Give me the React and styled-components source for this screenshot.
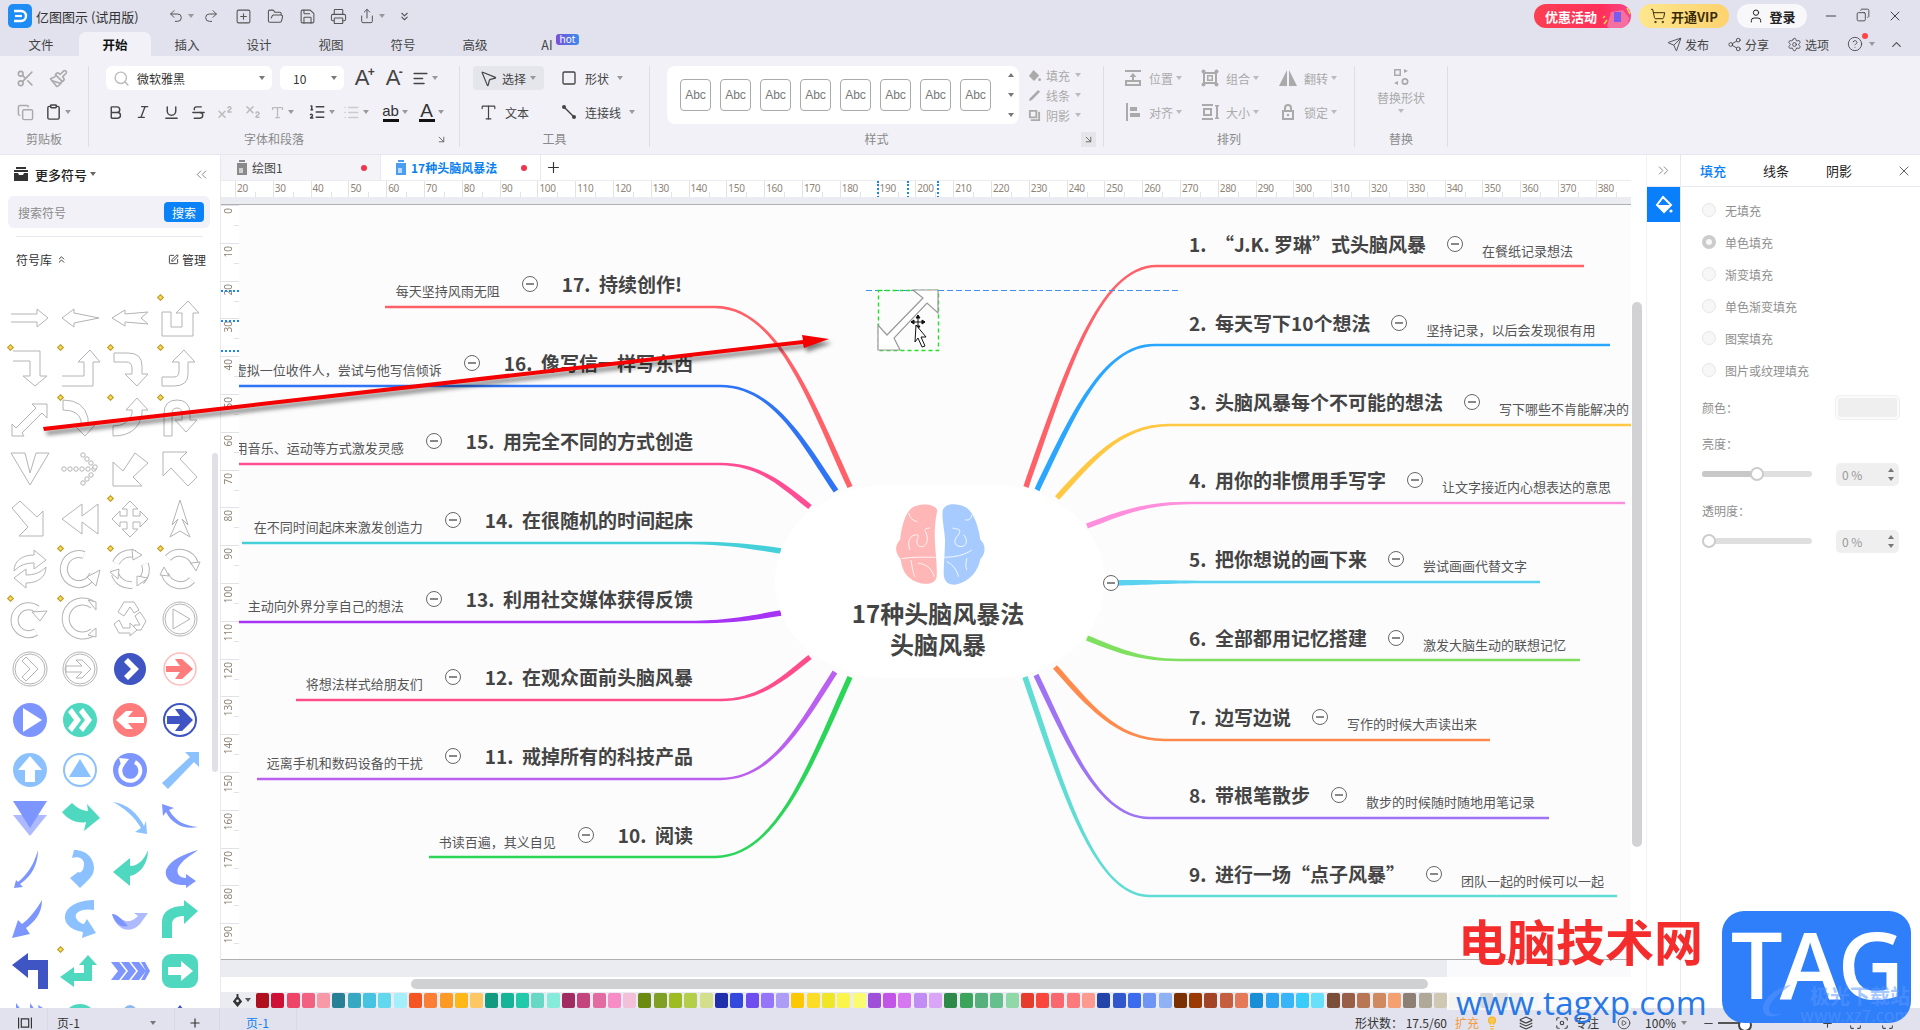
import React from "react";
import styled, { createGlobalStyle } from "styled-components";
import {
  Undo2, Redo2, SquarePlus, FolderOpen, Save, Printer, Share, ChevronsDown, Scissors, Paintbrush, Copy, Clipboard,
  Bold, Italic, Underline, Strikethrough, Superscript, Subscript, Type, AlignLeft, List, MousePointer2, Square,
  Search, Send, Share2, Settings, CircleHelp, ChevronUp, Minus, X, ShoppingCart, User, ChevronsLeft, ChevronsRight,
  Plus, ChevronsUp, SquarePen, CirclePlay, Layers, Lightbulb, Focus, Maximize, ArrowDownRight, ListOrdered,
} from "lucide-react";

const GlobalStyle = createGlobalStyle`
  html, body { margin: 0; padding: 0; background: #fff; }
  * { box-sizing: border-box; }
  body { font-family: "Noto Sans CJK SC", "Noto Sans", sans-serif; color: #333; }
`;

const Page = styled.div`
  position: relative; width: 1920px; height: 1030px; overflow: hidden;
  display: flex; flex-direction: column; font-size: 12px;
`;

/* ---------- title bar ---------- */
const TitleBar = styled.div`
  height: 32px; background: #e1e2ed; display: flex; align-items: center; padding-left: 8px; flex: none;
`;
const AppLogo = styled.svg`width: 24px; height: 24px; flex: none;`;
const AppName = styled.div`margin-left: 4px; width: 132px; font-size: 13px; color: #333; white-space: nowrap;`;
const QuickBtn = styled.div`
  width: ${p => p.$w || 31}px; flex: none; display: flex; align-items: center; justify-content: center; color: #555; gap: 1px;
`;
const Caret = styled.span`
  display: inline-block; width: 0; height: 0; flex: none; margin-left: ${p => p.$ml ?? 3}px;
  border-left: 3px solid transparent; border-right: 3px solid transparent; border-top: 4px solid ${p => p.$c || "#999"};
`;
const Spacer = styled.div`flex: 1;`;
const Pill = styled.div`
  height: 24px; border-radius: 12px; display: flex; align-items: center; justify-content: center; gap: 5px;
  width: ${p => p.$w}px; margin-right: 8px; font-size: 13px; font-weight: 700; flex: none;
`;
const PromoPill = styled(Pill)`
  background: linear-gradient(90deg, #fb3f52, #ff2f5a 70%, #f5468a); color: #fff; justify-content: flex-start;
  padding-left: 11px; position: relative; overflow: hidden;
`;
const PromoArt = styled.svg`position: absolute; right: 0; top: 0; width: 30px; height: 24px;`;
const VipPill = styled(Pill)`background: linear-gradient(90deg, #fde68d, #fed26e); color: #3a2c08;`;
const LoginPill = styled(Pill)`background: #f8f8fb; color: #222;`;
const WinBtn = styled.div`width: 32px; display: flex; justify-content: center; color: #444;`;
const WinButtons = styled.div`display: flex; margin: 0 9px 0 0; flex: none;`;

/* ---------- menu tabs ---------- */
const MenuBar = styled.div`
  height: 24px; background: #e1e2ed; display: flex; align-items: flex-end; flex: none; padding-left: 3px; position: relative;
`;
const MenuTab = styled.div`
  width: ${p => p.$w || 72}px; height: 24px; display: flex; align-items: center; justify-content: center; font-size: 12.5px; flex: none;
  border-radius: 7px 7px 0 0; background: ${p => p.$active ? "#f1f1f7" : "transparent"};
  font-weight: ${p => p.$active ? 700 : 400}; color: ${p => p.$active ? "#111" : "#444"}; position: relative;
`;
const HotBadge = styled.span`
  position: absolute; right: 4px; top: 2px; width: 23px; height: 11px; border-radius: 3px; color: #fff; font-size: 10px;
  line-height: 10px; text-align: center; background: linear-gradient(90deg, #7a4fd8, #3a8cf0); font-family: "Noto Sans", sans-serif;
`;
const MenuRight = styled.div`margin-left: auto; display: flex; align-items: center; height: 24px; color: #555; padding-right: 16px;`;
const MenuAction = styled.div`display: flex; align-items: center; gap: 3px; margin-right: ${p => p.$mr || 18}px; font-size: 12px; color: #444; position: relative;`;
const RedDot = styled.span`
  position: absolute; width: 6px; height: 6px; border-radius: 50%; background: #f44; right: ${p => p.$r || 0}px; top: ${p => p.$t || 0}px;
`;

/* ---------- ribbon ---------- */
const Ribbon = styled.div`
  height: 99px; background: #f1f1f7; display: flex; flex: none; border-bottom: 1px solid #e6e6ec; padding: 10px 0 7px;
`;
const RGroup = styled.div`
  width: ${p => p.$w}px; flex: none; position: relative; display: flex; flex-direction: column;
  border-right: 1px solid #dedee4; padding-left: ${p => p.$pl || 0}px;
`;
const RRows = styled.div`flex: 1; display: flex; flex-direction: column; gap: 10px;`;
const RRow = styled.div`height: 24px; display: flex; align-items: center; color: ${p => p.$c || "#444"};`;
const RLabel = styled.div`
  position: absolute; left: 0; right: 0; bottom: 1px; text-align: center; font-size: 12px; color: #8a8a8a; line-height: 15px;
`;
const Launcher = styled.div`
  position: absolute; right: ${p => p.$r || 10}px; bottom: 0; width: 15px; height: 15px; display: flex; align-items: center; justify-content: center;
  background: ${p => p.$bg || "transparent"}; color: #666;
`;
const Cell = styled.div`
  width: ${p => p.$w}px; flex: none; display: flex; align-items: center; justify-content: ${p => p.$left ? "flex-start" : "center"};
  gap: ${p => p.$gap || 0}px; color: ${p => p.$c || "inherit"}; font-size: 12px; white-space: nowrap; height: 24px;
  padding-left: ${p => p.$pl || 0}px;
`;
const Combo = styled.div`
  width: ${p => p.$w}px; height: 24px; background: #fff; border-radius: 6px; display: flex; align-items: center; padding: 0 7px 0 ${p => p.$pl || 7}px;
  margin-right: 8px; font-size: 12px; color: #333; flex: none; gap: 7px;
`;
const ComboText = styled.span`flex: 1;`;
const SelectBtn = styled.div`
  width: 71px; height: 24px; background: #e5e5ec; border-radius: 4px; display: flex; align-items: center; padding-left: 6px; gap: 4px;
  margin-right: 8px; font-size: 12px; color: #444; flex: none;
`;
const LetterA = styled.span`font-size: 22px; font-family: "Liberation Sans", sans-serif; color: #444; position: relative; line-height: 22px;`;
const Sup = styled.sup`font-size: 12px; line-height: 0; position: absolute; left: 13px; top: 5px; font-weight: 700;`;
const ColorBar = styled.span`
  display: flex; flex-direction: column; align-items: center; font: ${p => p.$fs || 15}px/15px "Liberation Sans", sans-serif; color: #333;
  &::after { content: ""; width: 16px; height: 3px; background: #111; margin-top: 1px; }
`;
const Gallery = styled.div`
  width: 352px; height: 58px; background: #fff; border-radius: 8px; display: flex; align-items: center; padding-left: 13px; gap: 9px; position: relative; flex: none;
`;
const StyleBox = styled.div`
  width: 31px; height: 32px; border: 1px solid #aaa; border-radius: 4px; font: 12px "Liberation Sans", sans-serif; color: #777;
  display: flex; align-items: center; justify-content: center; flex: none;
`;
const GalleryArrows = styled.div`
  position: absolute; right: 5px; top: 7px; bottom: 7px; display: flex; flex-direction: column; justify-content: space-between; align-items: center;
`;
const ArrowUp = styled.span`width:0;height:0;border-left:3px solid transparent;border-right:3px solid transparent;border-bottom:4px solid #777;`;
const ArrowDown = styled.span`width:0;height:0;border-left:3px solid transparent;border-right:3px solid transparent;border-top:4px solid #777;`;
const StyleRow = styled.div`display: flex; gap: 9px; align-items: flex-start;`;
const SmallCol = styled.div`display: flex; flex-direction: column; gap: 2px; padding-top: 0; color: #aaa;`;
const SmallItem = styled.div`height: 18px; display: flex; align-items: center; gap: 5px; font-size: 12px; color: #aaa;`;
const ReplaceCol = styled.div`display: flex; flex-direction: column; align-items: center; color: #aaa; padding-top: 2px; font-size: 12px; gap: 3px;`;
const Ico = styled.svg`width: ${p => p.$s || 18}px; height: ${p => p.$s || 18}px; fill: currentColor; flex: none;`;

/* ---------- body ---------- */
const Body = styled.div`flex: 1; display: flex; min-height: 0;`;
const LeftPanel = styled.div`
  width: 221px; flex: none; background: #fff; border-right: 1px solid #e8e8ee; display: flex; flex-direction: column; position: relative; overflow: hidden;
`;
const LeftHead = styled.div`height: 35px; display: flex; align-items: center; padding: 3px 10px 0 13px; flex: none;`;
const LeftTitle = styled.div`font-size: 13px; color: #222; margin-left: 6px; font-weight: 500; flex: 1; display: flex; align-items: center;`;
const SearchBox = styled.div`
  margin: 6px 10px 0 8px; height: 32px; background: #f1f1f7; border-radius: 6px; display: flex; align-items: center; padding: 0 6px 0 10px; color: #8a8a8a; font-size: 12px; flex: none;
`;
const SearchBtn = styled.div`
  margin-left: auto; width: 40px; height: 20px; border-radius: 4px; background: #0a82f8; color: #fff; font-size: 12px; display: flex; align-items: center; justify-content: center;
`;
const LeftDivider = styled.div`height: 1px; background: #e8e8ec; margin: 8px 17px 0 16px; flex: none;`;
const LibRow = styled.div`height: 38px; display: flex; align-items: center; padding: 6px 14px 0 16px; color: #333; font-size: 12px; gap: 4px; flex: none;`;
const LibManage = styled.div`margin-left: auto; display: flex; align-items: center; gap: 3px;`;
const SymbolGrid = styled.div`
  margin-top: 18px; padding-left: 5px; display: grid; grid-template-columns: repeat(4, 50px); grid-auto-rows: 50.2px; flex: none;
`;
const SymbolCell = styled.div`position: relative; display: flex; align-items: center; justify-content: center;`;
const SymbolSvg = styled.svg`
  width: 40px; height: 40px; fill: #fff; stroke: #b4b4b4; stroke-width: 1; overflow: visible; stroke-linejoin: miter;
`;
const Diamond = styled.span`
  position: absolute; left: 3px; top: 2px; width: 5px; height: 5px; background: #ffd84f; border: 1px solid #b59b3a; transform: rotate(45deg);
`;
const LeftScroll = styled.div`position: absolute; left: 212px; top: 298px; width: 6px; height: 319px; border-radius: 3px; background: #e0e0e6;`;

const Workspace = styled.div`flex: 1; display: flex; flex-direction: column; min-width: 0; background: #fff;`;
const DocTabs = styled.div`height: 25px; display: flex; align-items: center; flex: none; background: #fff;`;
const DocTab = styled.div`
  width: 160px; height: 25px; display: flex; align-items: center; padding-left: ${p => p.$active ? 14 : 15}px; gap: 4px; font-size: 12px; flex: none;
  background: ${p => p.$active ? "#fff" : "#f4f4f8"}; border-right: 1px solid #e8e8ee; position: relative;
  color: ${p => p.$active ? "#0a7ff0" : "#444"}; font-weight: ${p => p.$active ? 700 : 400};
`;
const DocDot = styled.span`position: absolute; right: 13px; top: 10px; width: 6px; height: 6px; border-radius: 50%; background: #f0354a;`;
const AddTab = styled.div`margin-left: 4px; color: #333; display: flex;`;

const WorkRow = styled.div`flex: 1; display: flex; min-height: 0;`;
const WorkMain = styled.div`width: 1410px; display: flex; flex-direction: column; flex: none;`;
const Gutter = styled.div`flex: 1; background: #fff; position: relative;`;
const GutterThumb = styled.div`position: absolute; left: 1px; top: 122px; width: 10px; height: 545px; border-radius: 5px; background: #d2d2d5;`;
const HRuler = styled.div`
  height: 17px; flex: none; display: flex; padding-left: 14px; overflow: hidden; background: #fff; position: relative; border-top: 1px solid #ececf0;
`;
const HTick = styled.div`
  width: 37.8px; flex: none; position: relative; font-size: 10px; color: #8f8478; line-height: 15px; padding-left: 1px; border-left: 1px solid #e2e2e6;
  font-family: "Noto Sans", sans-serif; letter-spacing: -.3px;
  &::after { content: ""; position: absolute; left: 19px; bottom: 0; width: 1px; height: 5px; background: #e2e2e6; }
`;
const RulerMark = styled.span`position: absolute; left: ${p => p.$x}px; top: 0; height: 17px; border-left: 2px dotted #1a86f0;`;
const VRulerMark = styled.span`position: absolute; top: ${p => p.$y}px; left: 0; width: 18px; border-top: 2px dotted #1a86f0;`;
const GrayBand = styled.div`height: ${p => p.$h}px; background: #ebebf2; flex: none; ${p => p.$line === "bottom" ? "border-bottom:1px solid #b0b0b4;" : ""} ${p => p.$line === "top" ? "border-top:1px solid #b0b0b4;" : ""}`;
const CanvasRow = styled.div`height: 754px; display: flex; flex: none;`;
const VRuler = styled.div`width: 18px; flex: none; overflow: hidden; background: #fff; position: relative;`;
const VTick = styled.div`
  height: 37.8px; position: relative; border-top: 1px solid #e2e2e6; font-size: 10px; color: #8f8478; font-family: "Noto Sans", sans-serif;
  &::after { content: ""; position: absolute; right: 0; top: 19px; height: 1px; width: 5px; background: #e2e2e6; }
`;
const VLabel = styled.span`position: absolute; left: 2px; top: 2px; writing-mode: vertical-rl; transform: rotate(180deg); line-height: 11px;`;
const Canvas = styled.div`flex: 1; position: relative; overflow: hidden; background: #fcfcfd;`;
const MapSvg = styled.svg`position: absolute; left: 0; top: 0; width: 1392px; height: 754px;`;
const Blob = styled.div`
  position: absolute; left: 536px; top: 280px; width: 330px; height: 193px; border-radius: 112px / 96px; background: #fff;
  display: flex; flex-direction: column; align-items: center;
`;
const Brain = styled.svg`width: 94px; height: 86px; margin-top: 16px; flex: none;`;
const CenterTitle = styled.div`
  font-size: 24px; font-weight: 700; line-height: 31px; color: #444; text-align: center; margin-top: 10px; margin-left: -4px; white-space: nowrap;
`;
const Node = styled.div`
  position: absolute; top: ${p => p.$y - 205 - 15}px; height: 30px; display: flex; align-items: center; white-space: nowrap;
  ${p => p.$side === "l" ? `right: ${1631 - p.$x}px;` : `left: ${p.$x - 239}px;`}
`;
const NodeHead = styled.div`font-size: 19px; font-weight: 700; color: #444; line-height: 30px; white-space: pre;`;
const NodeSub = styled.div`font-size: 13px; color: #555; line-height: 18px; margin-top: 14px;`;
const MinusBtn = styled.div`
  width: 16px; height: 16px; border-radius: 50%; border: 1px solid #666; background: #fff; flex: none; position: relative;
  margin: 0 ${p => p.$mr}px 0 ${p => p.$ml}px;
  &::after { content: ""; position: absolute; left: 3px; right: 3px; top: 6px; height: 2px; background: #888; }
`;
const LooseMinus = styled(MinusBtn)`position: absolute; left: 864px; top: 370px; margin: 0; z-index: 2;`;
const DashLine = styled.div`
  position: absolute; left: 627px; top: 85px; width: 314px; height: 1px;
  background: repeating-linear-gradient(90deg, #3d8ff0 0 6px, transparent 6px 9px);
`;
const DropBox = styled.svg`position: absolute; left: 639px; top: 83px; width: 64px; height: 64px; overflow: visible;`;
const PointerSvg = styled.svg`position: absolute; left: 667px; top: 108px; width: 24px; height: 36px;`;

const HScrollStrip = styled.div`height: 15px; background: #fff; flex: none; padding: 2px 0 3px 190px;`;
const HThumb = styled.div`width: 1017px; height: 10px; border-radius: 5px; background: #d0d1d3;`;
const Palette = styled.div`height: 16px; background: #ebebf2; display: flex; align-items: center; flex: none; padding-left: 10px; overflow: hidden;`;
const PaletteIcon = styled.div`width: 25px; display: flex; align-items: center; color: #333; flex: none;`;
const Swatch = styled.span`
  width: 13px; height: 15px; border-radius: 2px; margin-right: 2.3px; background: ${p => p.$c}; flex: none;
`;

const Rail = styled.div`width: 35px; flex: none; background: #fff; border-right: 1px solid #e8e8ee; border-left: 1px solid #f2f2f4;`;
const RailTop = styled.div`height: 32px; display: flex; align-items: center; justify-content: center; color: #777; border-bottom: 1px solid #e8e8ee;`;
const RailActive = styled.div`height: 35px; background: #0a7ffb; display: flex; align-items: center; justify-content: center; color: #fff;`;
const RightPanel = styled.div`width: 239px; flex: none; background: #fff; display: flex; flex-direction: column;`;
const RTabs = styled.div`height: 32px; display: flex; align-items: center; padding-left: 19px; gap: 37px; border-bottom: 1px solid #e8e8ee; position: relative; font-size: 13px; color: #222;`;
const RTab = styled.div`color: ${p => p.$active ? "#0a7ffb" : "#222"}; font-weight: ${p => p.$active ? 500 : 400};`;
const RClose = styled.div`position: absolute; right: 8px; top: 8px; color: #555; display: flex;`;
const RBody = styled.div`padding: 7px 21px 0 21px; color: #8f8f8f; font-size: 12px;`;
const RadioRow = styled.div`height: 32px; display: flex; align-items: center; gap: 9px; padding-left: 0;`;
const Radio = styled.span`
  width: 14px; height: 14px; border-radius: 50%; background: #f7f7f7; border: ${p => p.$on ? "4px solid #ccc" : "1px solid #e6e6e6"}; flex: none;
`;
const FieldRow = styled.div`display: flex; align-items: center; justify-content: space-between; height: 24px; margin-top: ${p => p.$mt || 0}px;`;
const ColorField = styled.div`width: 63px; height: 23px; border-radius: 4px; border: 2px solid #fbfbfb; outline: 1px solid #f0f0f0; background: #efefef;`;
const SpinBox = styled.div`
  width: 63px; height: 23px; border-radius: 5px; background: #efefef; display: flex; align-items: center; padding: 0 6px; color: #999; position: relative; font-size: 12px;
`;
const SpinArrows = styled.div`position: absolute; right: 5px; top: 5px; bottom: 5px; display: flex; flex-direction: column; justify-content: space-between;`;
const Slider = styled.div`width: 110px; height: 6px; border-radius: 3px; background: #dfdfdf; position: relative;`;
const SliderFill = styled.div`height: 6px; border-radius: 3px; background: #c8c8c8;`;
const SliderThumb = styled.span`
  position: absolute; top: -4px; width: 14px; height: 14px; border-radius: 50%; background: #fff; border: 2px solid #ccc;
`;

/* ---------- status ---------- */
const StatusBar = styled.div`
  height: 22px; background: #e1e2ed; display: flex; align-items: flex-start; flex: none; font-size: 12px; line-height: 14px; color: #333; overflow: hidden;
`;
const StatusCell = styled.div`
  width: ${p => p.$w}px; flex: none; display: flex; align-items: center; height: 22px; padding: 8px 0 0 ${p => p.$pl || 0}px;
  border-right: 1px solid #d8d9e4; color: ${p => p.$c || "#333"}; gap: 6px;
`;
const StatusRight = styled.div`margin-left: auto; display: flex; align-items: center; width: 565px; height: 22px; padding-top: 8px; color: #444; flex: none;`;
const StatusText = styled.span`margin-right: ${p => p.$mr || 0}px; color: ${p => p.$c || "#333"}; white-space: nowrap;`;
const StatusIcon = styled.span`display: flex; margin-right: ${p => p.$mr || 0}px; margin-left: ${p => p.$ml || 0}px;`;
const ZoomLine = styled.span`width: 25px; height: 2px; background: #555; display: block; position: relative; margin-right: 78px;
  &::after { content: ""; position: absolute; right: -9px; top: -4px; width: 10px; height: 10px; border-radius: 50%; border: 2px solid #444; background: #fff; }
`;

/* ---------- overlays ---------- */
const RedArrow = styled.svg`
  position: absolute; left: 0; top: 0; width: 1920px; height: 1030px; pointer-events: none; overflow: visible;
  filter: drop-shadow(3px 4px 2px rgba(0,0,0,.5));
`;
const WatermarkVeil = styled.div`position: absolute; left: 1447px; top: 960px; width: 184px; height: 50px; background: rgba(255,255,255,.72);`;
const WmRed = styled.div`
  position: absolute; left: 1458px; top: 910px; font: 700 49px/60px "Noto Sans CJK SC", sans-serif; color: #f52c2c; letter-spacing: 0; white-space: nowrap;
`;
const WmUrl = styled.div`
  position: absolute; left: 1456px; top: 982px; font: 33.5px/40px "Open Sans", "Liberation Sans", sans-serif; color: #2878e6; letter-spacing: .1px; white-space: nowrap;
`;
const TagBox = styled.div`
  position: absolute; left: 1722px; top: 911px; width: 189px; height: 112px; border-radius: 22px; background: #2f7ffb; overflow: hidden;
  display: flex; justify-content: center;
`;
const TagText = styled.div`font: 600 92px/106px "Open Sans", "Liberation Sans", sans-serif; color: #fff; letter-spacing: -3px; margin-left: -1px;`;
const TagFaint = styled.div`
  position: absolute; right: 1px; top: 73px; line-height: 24px; font-weight: 700; font-size: 20px; color: rgba(90,150,255,.55); text-align: right; white-space: nowrap;
`;
const TagFaintUrl = styled.div`font-size: 17px; font-weight: 400; line-height: 14px;`;
const TagSwirl = styled.svg`position: absolute; left: 39px; top: 72px; width: 36px; height: 38px;`;

/* ---------- data ---------- */
const RIGHT = [
  ["1.  “J.K. 罗琳”式头脑风暴", "在餐纸记录想法", 244],
  ["2.  每天写下10个想法", "坚持记录，以后会发现很有用", 323],
  ["3.  头脑风暴每个不可能的想法", "写下哪些不肯能解决的", 402],
  ["4.  用你的非惯用手写字", "让文字接近内心想表达的意思", 480],
  ["5.  把你想说的画下来", "尝试画画代替文字", 559],
  ["6.  全部都用记忆搭建", "激发大脑生动的联想记忆", 638],
  ["7.  边写边说", "写作的时候大声读出来", 717],
  ["8.  带根笔散步", "散步的时候随时随地用笔记录", 795],
  ["9.  进行一场“点子风暴”", "团队一起的时候可以一起", 874],
];
const LEFT = [
  ["17.  持续创作!", "每天坚持风雨无阻", 284, 682],
  ["16.  像写信一样写东西", "虚拟一位收件人，尝试与他写信倾诉", 363, 693],
  ["15.  用完全不同的方式创造", "利用音乐、运动等方式激发灵感", 441, 693],
  ["14.  在很随机的时间起床", "在不同时间起床来激发创造力", 520, 693],
  ["13.  利用社交媒体获得反馈", "主动向外界分享自己的想法", 599, 693],
  ["12.  在观众面前头脑风暴", "将想法样式给朋友们", 677, 693],
  ["11.  戒掉所有的科技产品", "远离手机和数码设备的干扰", 756, 693],
  ["10.  阅读", "书读百遍，其义自见", 835, 693],
];
/* colour, line far end x, y, curve start x, end x, end y */
const BRANCHES = [
  ["#ff6168", 1584, 266, 1157, 1026, 487], ["#2aa6ff", 1610, 345, 1155, 1037, 490],
  ["#ffc843", 1639, 425, 1170, 1057, 498], ["#ff8fdc", 1625, 503, 1190, 1087, 526],
  ["#5bd2f0", 1540, 582, 1200, 1112, 583], ["#7fe060", 1580, 660, 1180, 1087, 638],
  ["#ff8a4c", 1490, 740, 1165, 1055, 667], ["#9e74f5", 1549, 818, 1150, 1036, 675],
  ["#5fdcd4", 1617, 896, 1150, 1025, 677],
  ["#ff6168", 385, 307, 715, 850, 487], ["#2f74f5", 230, 386, 720, 836, 491],
  ["#ff4d94", 230, 464, 720, 810, 507], ["#45cfd8", 242, 543, 690, 781, 551],
  ["#a733f5", 230, 622, 690, 781, 613], ["#ff4d8c", 296, 700, 720, 810, 657],
  ["#bb5ff0", 257, 779, 720, 835, 672], ["#2ad558", 429, 857, 715, 850, 677],
];
function branchPath([, x0, y, hx, ex, ey]) {
  const c1x = hx + (ex - hx) * 0.45, c2x = hx + (ex - hx) * 0.7, c2y = y + (ey - y) * 0.5;
  const tx = ex - c2x, ty = ey - c2y, l = Math.hypot(tx, ty) || 1;
  const f = n => n.toFixed(1);
  /* normal of the curve's end, picked to lie on the side of the line's upper edge */
  const dir = Math.sign(ex - hx);
  const nx = (ty / l) * 2.7 * dir, ny = (-tx / l) * 2.7 * dir;
  const upper = [ex + nx, ey + ny], lower = [ex - nx, ey - ny];
  return `M${x0} ${y - 1.2}H${hx}C${f(c1x)} ${y - 1.6} ${f(c2x + nx)} ${f(c2y + ny)} ${f(upper[0])} ${f(upper[1])}` +
    `L${f(lower[0])} ${f(lower[1])}C${f(c2x - nx)} ${f(c2y - ny)} ${f(c1x)} ${y + 1.6} ${hx} ${y + 1.2}H${x0}Z`;
}

const PAL = ["#b0101e","#cf1036","#ee4468","#f2617f","#f899a8","#288096","#36a8c2","#46c3e0","#62d8ee","#a5effc","#f55522","#fa7f35","#fd9a25","#fdb716","#fdc763","#109a80","#15b498","#20c9aa","#66d8c5","#85ecdc","#a02c62","#c4447e","#e26ca2","#f88cc6","#f2c0d8","#6a8a10","#7fa025","#9cbc22","#b3cf4a","#d3df8c","#2030ac","#3348dc","#6f4ef0","#9576f8","#ad9cf5","#fdc800","#fddc25","#f0e628","#fbf44a","#fbfb72","#9e50d8","#c255e8","#d676f0","#c28cf5","#d9a5f7","#2e8a48","#3aa45a","#55b07c","#65c08e","#90d8a8","#e53c2c","#fb463c","#f8686e","#fc7a7c","#fd9a90","#2244a8","#3058cc","#3c6cee","#6e94f4","#8eb2f4","#7a3000","#9c3a04","#a44426","#c65e40","#e47a58","#188ed6","#2ea4f0","#38b4f8","#38ccf8","#68e0fc","#7a4e38","#985e48","#b87654","#d08a60","#f4a070","#8c8074","#b0a898","#cec8b4","#d8d8c8","#e4e4d8","#777","#999","#bbb","#ddd"];

/* ---------- symbols ---------- */
const Tube = ({ d }) => (<><path d={d} fill="none" stroke="#b4b4b4" strokeWidth="8" /><path d={d} fill="none" stroke="#fff" strokeWidth="6" /></>);
const F = ({ d, c, ...r }) => <path d={d} fill={c} stroke="none" {...r} />;
const C = ({ r = 17, c, ring }) => ring
  ? <circle cx="20" cy="20" r={r} fill="#fff" stroke={c} strokeWidth="2" />
  : <circle cx="20" cy="20" r={r} fill={c} stroke="none" />;
const DBL = () => (<><circle cx="20" cy="20" r="17" /><circle cx="20" cy="20" r="15" /></>);
const BLUE = "#3f55c3", PERI = "#7d95ff", SKY = "#8cc1ff", TEAL = "#4fd8c0", CORAL = "#ff7c7c";
const SYMBOLS = [
  [<path d="M1 16H27V11L38 20L27 29V24H1" />, false],
  [<path d="M39 20L14 15V11L2 20L14 29V25Z" />, false],
  [<path d="M38 14L15 16V12L2 20L15 28V24L38 26L31 20Z" />, false],
  [<path d="M2 14H11V29H22V15H16L28 3L39 15H33V38H2Z" />, true],
  [<path d="M3 3H30V28H37L25 38L13 28H20V13H3" />, true],
  [<path d="M2 28H24V14H18L30 2L40 14H33V38H2" />, true],
  [<path d="M4 5H18Q32 5 32 18V26H38L27 38L15 26H22V20Q22 14 16 14H4Z" />, true],
  [<path d="M2 29H14Q19 29 19 23V14H12L24 2L35 14H28V26Q28 38 14 38H2Z" />, true],
  [<path d="M14 38H2V26L6 30L26 10L22 6H37V20L32 15L12 35Z" />, false],
  [<path d="M3 2Q24 2 28 20V27H35L25 38L14 27H21V22Q18 12 3 12Z" />, true],
  [<path d="M3 38V28Q18 28 22 16V12H16L27 0L38 12H32V16Q28 38 3 38Z" />, true],
  [<path d="M4 38V16Q4 2 17 2Q30 2 30 16V22H37L26 34L15 22H22V16Q22 10 17 10Q12 10 12 16V38Z" />, true],
  [<path d="M1 4H15L20 24L26 4H39L20 36Z" />, false],
  [<g>{[[4,20],[10,20],[16,20],[22,20],[28,20],[34,20],[23,6],[27,10],[31,14],[35,18],[31,26],[27,30],[23,34]].map(([x,y],i)=><circle key={i} cx={x} cy={y} r="2.2" />)}</g>, false],
  [<path d="M3 37V13L13 22L25 4L38 14L23 28L32 37Z" />, false],
  [<path d="M3 3H27L20 10L37 28L28 37L11 19L3 27Z" />, false],
  [<path d="M2 9L10 2L27 18L33 12V37H9L18 28Z" />, false],
  [<path d="M2 20L22 5V17L38 5V35L22 23V35Z" />, false],
  [<path d="M20 2L28 10H23V17H30V12L38 20L30 28V23H23V30H28L20 38L12 30H17V23H10V28L2 20L10 12V17H17V10H12Z" />, true],
  [<path d="M20 1L28 26L22 20L30 38L20 32L10 38L18 20L12 26Z" />, false],
  [<g><path d="M4 22C4 12 12 6 24 6V1L36 11L24 20V14C16 14 10 16 4 22Z" /><path d="M36 18C36 28 28 34 16 34V39L4 29L16 20V26C24 26 30 24 36 18Z" /></g>, false],
  [<g><Tube d="M24 6A15 15 0 1 0 33 25" /><path d="M27 28L40 21L36 37Z" /></g>, true],
  [<g><Tube d="M6 14A16 16 0 0 1 25 5" /><path d="M22 0L32 6L23 11Z" /><Tube d="M35 15A16 16 0 0 1 31 32" /><path d="M38 29L27 37L27 27Z" /><Tube d="M22 36A16 16 0 0 1 5 25" /><path d="M0 23L9 20L8 30Z" /></g>, true],
  [<g><Tube d="M8 9A16 16 0 0 1 35 15" /><path d="M31 14L40 13L36 22Z" /><Tube d="M32 31A16 16 0 0 1 5 25" /><path d="M0 26L9 27L4 18Z" /></g>, true],
  [<g><Tube d="M27 10A14 14 0 1 0 26 33" /><path d="M22 13L37 12L30 22Z" /></g>, true],
  [<g><Tube d="M33 6A17 17 0 1 0 33 33" /><path d="M28 1L36 3L36 11Z" /><path d="M28 36L36 38L36 29Z" /></g>, true],
  [<g><path d="M14 3H24L29 11L24 14L20 8L14 17L8 13Z" /><path d="M30 13L36 22L31 31H24V26H30L25 17Z" /><path d="M20 34H9L4 25L9 21L13 29H20V24L27 31L20 37Z" /></g>, false],
  [<g><DBL /><path d="M13 10L30 20L13 30Z" /></g>, false],
  [<g><DBL /><path d="M12 12L16 8L28 20L16 32L12 28L20 20Z" /></g>, false],
  [<g><DBL /><path d="M6 17H22L16 11H22L31 20L22 29H16L22 23H6Z" /></g>, false],
  [<g><C r={16} c={BLUE} /><F d="M14 13L18 9L29 20L18 31L14 27L21 20Z" c="#fff" /></g>, false],
  [<g><circle cx="20" cy="20" r="16" fill="#fff" stroke="#ffbcbc" strokeWidth="1.5" /><F d="M6 17H20L15 10H22L33 20L22 30H15L20 23H6Z" c={CORAL} /></g>, false],
  [<g><C c={PERI} /><F d="M13 8L32 20L13 32Z" c="#fff" /></g>, false],
  [<g><C c={TEAL} /><F d="M8 12L12 8L21 20L12 32L8 28L14 20ZM19 12L23 8L32 20L23 32L19 28L25 20Z" c="#fff" /></g>, false],
  [<g><C c={CORAL} /><F d="M34 17H18L23 11H16L6 20L16 29H23L18 23H34Z" c="#fff" /></g>, false],
  [<g><C r={16} c={BLUE} ring /><F d="M7 16H20L15 9H22L33 20L22 31H15L20 24H7Z" c={BLUE} /></g>, false],
  [<g><C c={SKY} /><F d="M20 6L32 20H25V32H15V20H8Z" c="#fff" /></g>, false],
  [<g><C r={16} c={SKY} ring /><F d="M20 9L31 27H9Z" c={SKY} /></g>, false],
  [<g><C c={PERI} /><path d="M13 14A10 10 0 1 0 25 12" fill="none" stroke="#fff" strokeWidth="4" /><F d="M9 8L19 9L12 18Z" c="#fff" /></g>, false],
  [<F d="M2 33L30 7L25 2H39V17L34 12L8 39Z" c={SKY} />, false],
  [<g><F d="M3 15H37L20 36Z" c="#aebaff" /><F d="M3 1H37L20 28Z" c={PERI} /></g>, false],
  [<F d="M2 12L12 3C18 9 24 11 28 11L27 4L40 18L24 31L26 22C18 24 8 20 2 12Z" c={TEAL} />, false],
  [<F d="M3 2C18 4 28 14 34 26L36 21L37 34L25 32L31 28C24 16 14 8 3 2Z" c={SKY} />, false],
  [<F d="M2 4L14 8L9 10C16 22 26 26 38 27C24 30 12 24 6 12L3 16Z" c={PERI} />, false],
  [<F d="M28 0C28 14 22 26 10 34L13 37L4 38L6 30L8 32C18 24 24 14 28 0Z" c={PERI} />, false],
  [<F d="M14 0C28 0 34 10 34 18C34 26 28 30 20 38L10 28L18 22C22 24 24 18 24 14C24 8 18 6 12 8Z" c={SKY} />, false],
  [<F d="M38 0C38 14 30 24 20 26V36L3 22L20 8V16C28 16 34 10 38 0Z" c={TEAL} />, false],
  [<F d="M38 0C30 6 22 10 18 18C16 24 20 28 26 28V24L36 31L26 38V35C14 36 4 30 6 20C10 10 24 4 38 0Z" c={PERI} />, false],
  [<F d="M32 0C32 14 24 22 16 28L20 34L2 38L8 20L12 24C20 18 26 10 32 0Z" c={PERI} />, false],
  [<F d="M34 0V10C22 8 14 12 16 18C18 22 22 24 24 24L27 19L36 33L22 38L23 32C10 30 2 22 6 12C10 4 22 0 34 0Z" c={SKY} />, false],
  [<g><F d="M2 14C10 16 16 28 28 16L24 13L38 13L30 24C18 36 6 28 2 14Z" c="#aebaff" /><F d="M2 14C8 14 12 20 18 26C10 28 4 22 2 14Z" c={PERI} /></g>, false],
  [<F d="M2 38V22C2 12 10 6 24 6V0L38 11L24 24V16C18 16 12 18 12 24V38Z" c={TEAL} />, false],
  [<g><F d="M18 2V9H38V38H28V19H18V27L2 14Z" c={BLUE} /></g>, false],
  [<F d="M40 26H32V10H37L28 0L19 10H24V18H14V12L0 22L14 32V26Z" c={TEAL} transform="translate(0 4)" />, true],
  [<F d="M1 11H9L16 20L9 29H1L8 20ZM11 11H19L26 20L19 29H11L18 20ZM21 11H29L36 20L29 29H21L28 20ZM31 11H35L40 20L35 29H31L36 20Z" c={PERI} />, false],
  [<g><rect x="2" y="3" width="36" height="34" rx="9" fill={TEAL} stroke="none" /><F d="M8 16H21V10L33 20L21 30V24H8Z" c="#fff" /></g>, false],
  [<g><F d="M6 2L12 10H20V2L26 10V22H6Z" c={PERI} /><F d="M28 4L38 10V20L30 14Z" c={PERI} /></g>, false],
  [<circle cx="20" cy="20" r="15" fill="none" stroke={TEAL} strokeWidth="4" />, false],
  [<ellipse cx="20" cy="18" rx="9" ry="14" fill="#8cb8ee" stroke="none" />, false],
  [<F d="M20 4L36 24H4Z" c={BLUE} />, false],
];

const Radios = ["无填充", "单色填充", "渐变填充", "单色渐变填充", "图案填充", "图片或纹理填充"];

const Spin = () => (<SpinArrows><ArrowUp /><ArrowDown /></SpinArrows>);

/* ribbon glyphs that the icon packages don't carry */
const IPosition = () => <Ico viewBox="0 0 18 18"><path d="M1 1H17V3H1ZM9 4L12.5 8H10V11H17V17H1V11H8V8H5.5ZM3 13V15H15V13Z" fillRule="evenodd" /></Ico>;
const IGroup = () => <Ico viewBox="0 0 18 18"><path d="M2 3H16V15H2ZM4 5V13H14V5Z" fillRule="evenodd" /><circle cx="2.5" cy="2.5" r="2" /><circle cx="15.5" cy="2.5" r="2" /><circle cx="2.5" cy="15.5" r="2" /><circle cx="15.5" cy="15.5" r="2" /><path d="M6 6H12V12H6ZM7.5 7.5V10.5H10.5V7.5Z" fillRule="evenodd" /></Ico>;
const IFlip = () => <Ico viewBox="0 0 18 18"><path d="M8 1V17H0ZM10 1L18 17H10Z" /></Ico>;
const IAlign = () => <Ico viewBox="0 0 18 18"><path d="M2 0H4V18H2ZM6 4H13V8H6ZM6 10H16V14H6Z" /></Ico>;
const ISize = () => <Ico viewBox="0 0 18 18"><path d="M1 1H12V3H1ZM1 15H12V17H1ZM2 5H11V13H2ZM4 7V11H9V7ZM14 2H18V3.5H17V14.5H18V16H14V14.5H15V3.5H14Z" fillRule="evenodd" /></Ico>;
const ILock = () => <Ico viewBox="0 0 18 18"><path d="M3 7H5V5A4 4 0 0 1 13 5V7H15V17H3ZM7 7H11V5A2 2 0 0 0 7 5ZM5 9V15H13V9Z" fillRule="evenodd" /><circle cx="9" cy="12" r="1.2" /></Ico>;
const IReplace = () => <Ico viewBox="0 0 18 18"><path d="M2 1H9V8H2ZM3.5 2.5V6.5H7.5V2.5Z" fillRule="evenodd" /><path d="M13 10A3.5 3.5 0 1 1 13 17A3.5 3.5 0 1 1 13 10ZM13 11.7A1.8 1.8 0 1 0 13 15.3A1.8 1.8 0 1 0 13 11.7Z" fillRule="evenodd" /><path d="M12 1L16 3L12 5ZM6 17L2 15L6 13Z" /></Ico>;
const IBucket = () => <Ico $s={13} viewBox="0 0 14 14"><path d="M6 1L12 7L6.5 13L1 7.5Z" /><circle cx="12.5" cy="11.5" r="1.5" /></Ico>;
const ILine = () => <Ico $s={13} viewBox="0 0 14 14"><path d="M11 1L13 3L4 12L1 13L2 10Z" /></Ico>;
const IShadow = () => <Ico $s={13} viewBox="0 0 14 14"><path d="M1 1H10V10H1ZM3 3V8H8V3Z" fillRule="evenodd" /><path d="M11 3H13V13H3V11H11Z" /></Ico>;
const IConnector = () => <Ico $s={16} viewBox="0 0 16 16"><path d="M3.5 2.5L13.5 12.5L12.5 13.5L2.5 3.5Z" /><circle cx="3" cy="3" r="2" /><circle cx="13" cy="13" r="2" /></Ico>;

export default function App() {
  return (
    <Page>
      <GlobalStyle />
      <TitleBar>
        <AppLogo viewBox="0 0 24 24">
          <rect width="24" height="24" rx="5" fill="#1f8cf5" />
          <path d="M6 7H13A5 5 0 0 1 13 17H6" fill="none" stroke="#fff" strokeWidth="2.4" />
          <path d="M7 12H14" stroke="#fff" strokeWidth="2.2" />
        </AppLogo>
        <AppName>亿图图示 (试用版)</AppName>
        <QuickBtn $w={26}><Undo2 size={16} strokeWidth={1.5} /><Caret /></QuickBtn>
        <QuickBtn $w={34}><Redo2 size={16} strokeWidth={1.5} /></QuickBtn>
        <QuickBtn><SquarePlus size={17} strokeWidth={1.5} /></QuickBtn>
        <QuickBtn $w={33}><FolderOpen size={17} strokeWidth={1.5} /></QuickBtn>
        <QuickBtn $w={30}><Save size={17} strokeWidth={1.5} /></QuickBtn>
        <QuickBtn $w={32}><Printer size={17} strokeWidth={1.5} /></QuickBtn>
        <QuickBtn $w={36}><Share size={16} strokeWidth={1.5} /><Caret /></QuickBtn>
        <QuickBtn $w={28}><ChevronsDown size={13} /></QuickBtn>
        <Spacer />
        <PromoPill $w={97}>优惠活动
          <PromoArt viewBox="0 0 30 24">
            <path d="M6 22L10 8L22 6L28 14L26 24H8Z" fill="#f56fa0" />
            <rect x="13" y="8" width="7" height="10" fill="#7b5cf0" />
            <path d="M3 20L6 16M26 4L29 10M2 14L4 12" stroke="#ffd54a" strokeWidth="1.5" />
          </PromoArt>
        </PromoPill>
        <VipPill $w={90}><ShoppingCart size={16} strokeWidth={1.5} />开通VIP</VipPill>
        <LoginPill $w={70}><User size={16} strokeWidth={1.5} />登录</LoginPill>
        <WinButtons>
          <WinBtn><Minus size={16} strokeWidth={1.5} /></WinBtn>
          <WinBtn><Copy size={14} strokeWidth={1.5} style={{ transform: "scaleX(-1)" }} /></WinBtn>
          <WinBtn><X size={16} strokeWidth={1.5} /></WinBtn>
        </WinButtons>
      </TitleBar>

      <MenuBar>
        <MenuTab $w={76}>文件</MenuTab>
        <MenuTab $active>开始</MenuTab>
        <MenuTab>插入</MenuTab>
        <MenuTab>设计</MenuTab>
        <MenuTab>视图</MenuTab>
        <MenuTab>符号</MenuTab>
        <MenuTab>高级</MenuTab>
        <MenuTab>AI<HotBadge>hot</HotBadge></MenuTab>
        <MenuRight>
          <MenuAction><Send size={15} strokeWidth={1.4} />发布</MenuAction>
          <MenuAction><Share2 size={15} strokeWidth={1.4} />分享</MenuAction>
          <MenuAction $mr={18}><Settings size={15} strokeWidth={1.4} />选项</MenuAction>
          <MenuAction $mr={14}><CircleHelp size={16} strokeWidth={1.3} /><Caret /><RedDot $r={7} $t={-3} /></MenuAction>
          <ChevronUp size={15} />
        </MenuRight>
      </MenuBar>

      <Ribbon>
        <RGroup $w={89} $pl={14}>
          <RRows>
            <RRow $c="#aaa"><Cell $w={22}><Scissors size={19} /></Cell><Cell $w={11} /><Cell $w={22}><Paintbrush size={19} /></Cell></RRow>
            <RRow $c="#aaa"><Cell $w={22}><Copy size={17} /></Cell><Cell $w={9} /><Cell $w={26} $c="#444"><Clipboard size={18} /><Caret /></Cell></RRow>
          </RRows>
          <RLabel>剪贴板</RLabel>
        </RGroup>
        <RGroup $w={371} $pl={17}>
          <RRows>
            <RRow>
              <Combo $w={166}><Search size={17} color="#bbb" /><ComboText>微软雅黑</ComboText><Caret $c="#777" /></Combo>
              <Combo $w={64} $pl={13}><ComboText>10</ComboText><Caret $c="#777" /></Combo>
              <Cell $w={20}><LetterA>A<Sup>+</Sup></LetterA></Cell>
              <Cell $w={10} />
              <Cell $w={22}><LetterA>A<Sup>-</Sup></LetterA></Cell>
              <Cell $w={8} />
              <Cell $w={26}><AlignLeft size={17} /><Caret /></Cell>
            </RRow>
            <RRow>
              <Cell $w={18}><Bold size={17} /></Cell><Cell $w={10} />
              <Cell $w={18}><Italic size={16} /></Cell><Cell $w={10} />
              <Cell $w={18}><Underline size={17} /></Cell><Cell $w={9} />
              <Cell $w={18}><Strikethrough size={17} /></Cell><Cell $w={9} />
              <Cell $w={18} $c="#bbb"><Superscript size={18} /></Cell><Cell $w={10} />
              <Cell $w={18} $c="#bbb"><Subscript size={18} /></Cell><Cell $w={8} />
              <Cell $w={24} $c="#bbb"><Type size={17} /><Caret /></Cell><Cell $w={12} />
              <Cell $w={30}><ListOrdered size={18} /><Caret /></Cell><Cell $w={6} />
              <Cell $w={28} $c="#ccc"><List size={17} /><Caret /></Cell><Cell $w={12} />
              <Cell $w={26}><ColorBar>ab</ColorBar><Caret /></Cell><Cell $w={10} />
              <Cell $w={26}><ColorBar $fs={19}>A</ColorBar><Caret /></Cell>
            </RRow>
          </RRows>
          <RLabel>字体和段落</RLabel>
          <Launcher><ArrowDownRight size={11} /></Launcher>
        </RGroup>
        <RGroup $w={190} $pl={13}>
          <RRows>
            <RRow>
              <SelectBtn><MousePointer2 size={19} strokeWidth={1.5} />选择<Caret $ml={0} /></SelectBtn>
              <Cell $w={85} $left $gap={8} $pl={9}>
                <Square size={16} strokeWidth={2} />形状<Caret $ml={0} />
              </Cell>
            </RRow>
            <RRow>
              <Cell $w={79} $left $gap={7} $pl={6}><Type size={19} strokeWidth={1.5} />文本</Cell>
              <Cell $w={85} $left $gap={8} $pl={9}>
                <IConnector />连接线<Caret $ml={0} />
              </Cell>
            </RRow>
          </RRows>
          <RLabel>工具</RLabel>
        </RGroup>
        <RGroup $w={454} $pl={17}>
          <StyleRow>
            <Gallery>
              {Array.from({ length: 8 }).map((_, i) => <StyleBox key={i}>Abc</StyleBox>)}
              <GalleryArrows><ArrowUp /><ArrowDown /><ArrowDown /></GalleryArrows>
            </Gallery>
            <SmallCol>
              <SmallItem><IBucket />填充<Caret $ml={0} $c="#bbb" /></SmallItem>
              <SmallItem><ILine />线条<Caret $ml={0} $c="#bbb" /></SmallItem>
              <SmallItem><IShadow />阴影<Caret $ml={0} $c="#bbb" /></SmallItem>
            </SmallCol>
          </StyleRow>
          <RLabel>样式</RLabel>
          <Launcher $bg="#e6e6ea" $r={7}><ArrowDownRight size={11} /></Launcher>
        </RGroup>
        <RGroup $w={251} $pl={20}>
          <RRows>
            <RRow $c="#aaa">
              <Cell $w={77} $left $gap={7}><IPosition />位置<Caret $ml={-4} $c="#bbb" /></Cell>
              <Cell $w={78} $left $gap={7}><IGroup />组合<Caret $ml={-4} $c="#bbb" /></Cell>
              <Cell $w={60} $left $gap={7}><IFlip />翻转<Caret $ml={-4} $c="#bbb" /></Cell>
            </RRow>
            <RRow $c="#aaa">
              <Cell $w={77} $left $gap={7}><IAlign />对齐<Caret $ml={-4} $c="#bbb" /></Cell>
              <Cell $w={78} $left $gap={7}><ISize />大小<Caret $ml={-4} $c="#bbb" /></Cell>
              <Cell $w={60} $left $gap={7}><ILock />锁定<Caret $ml={-4} $c="#bbb" /></Cell>
            </RRow>
          </RRows>
          <RLabel>排列</RLabel>
        </RGroup>
        <RGroup $w={93}>
          <ReplaceCol>
            <IReplace />
            替换形状
            <Caret $ml={0} $c="#bbb" />
          </ReplaceCol>
          <RLabel>替换</RLabel>
        </RGroup>
      </Ribbon>

      <Body>
        <LeftPanel>
          <LeftHead>
            <Ico $s={16} viewBox="0 0 16 16"><path d="M3 1H13V3H3ZM1 4H15V6H1ZM1 7H5L6 9H10L11 7H15V15H1Z" fill="#333" /></Ico>
            <LeftTitle>更多符号<Caret $c="#666" /></LeftTitle>
            <ChevronsLeft size={17} color="#777" strokeWidth={1.2} />
          </LeftHead>
          <SearchBox>搜索符号<SearchBtn>搜索</SearchBtn></SearchBox>
          <LeftDivider />
          <LibRow>符号库 <ChevronsUp size={11} /><LibManage><SquarePen size={11} />管理</LibManage></LibRow>
          <SymbolGrid>
            {SYMBOLS.map(([icon, diamond], i) => (
              <SymbolCell key={i}>
                {diamond && <Diamond />}
                <SymbolSvg viewBox="0 0 40 40">{icon}</SymbolSvg>
              </SymbolCell>
            ))}
          </SymbolGrid>
          <LeftScroll />
        </LeftPanel>

        <Workspace>
          <DocTabs>
            <DocTab><DocGlyph c="#8a8a8a" />绘图1<DocDot /></DocTab>
            <DocTab $active><DocGlyph c="#4a9df0" />17种头脑风暴法<DocDot /></DocTab>
            <AddTab><Plus size={17} strokeWidth={1.6} /></AddTab>
          </DocTabs>
          <WorkRow>
            <WorkMain>
              <HRuler>
                {Array.from({ length: 37 }).map((_, i) => <HTick key={i}>{20 + i * 10}</HTick>)}
                <RulerMark $x={656} /><RulerMark $x={686} /><RulerMark $x={716} />
              </HRuler>
              <GrayBand $h={8} $line="bottom" />
              <CanvasRow>
                <VRuler>
                  {Array.from({ length: 20 }).map((_, i) => <VTick key={i}><VLabel>{i * 10}</VLabel></VTick>)}
                  <VRulerMark $y={85} /><VRulerMark $y={115} /><VRulerMark $y={145} />
                </VRuler>
                <Canvas>
                  <MapSvg viewBox="239 205 1392 754">
                    {BRANCHES.map((b, i) => <path key={i} d={branchPath(b)} fill={b[0]} />)}
                  </MapSvg>
                  <Blob>
                    <Brain viewBox="405 125 280 255">
                      <path d="M537 152C530 135 500 130 470 140C445 150 432 190 426 240C412 255 408 275 428 298C432 335 450 362 490 370C510 372 530 372 535 350C537 320 532 280 530 250C528 215 530 185 537 152Z" fill="#ffb6b6" />
                      <path d="M553 152C560 130 595 130 620 142C645 155 660 200 665 240C682 255 682 280 665 298C660 330 635 365 590 374C570 374 558 365 556 345C556 310 560 270 560 240C558 205 550 180 553 152Z" fill="#a8cbff" />
                      <g fill="none" stroke="#fff" strokeWidth="2.5">
                        <path d="M452 160C455 175 465 185 478 185" />
                        <path d="M432 296C470 290 500 292 532 292" />
                        <path d="M455 270C445 240 460 225 475 225C490 225 470 240 478 255C490 268 510 258 507 232C505 215 490 205 515 205" />
                        <path d="M480 310C495 310 520 320 528 350" />
                        <path d="M458 300C462 320 465 340 470 350" />
                        <path d="M620 180C630 185 640 175 640 165" />
                        <path d="M558 292C590 292 620 285 640 270" />
                        <path d="M582 205C600 210 610 205 600 225C585 240 585 258 605 260C625 262 630 240 615 225" />
                        <path d="M565 305C585 315 595 330 600 350" />
                        <path d="M625 295C622 310 620 320 625 330" />
                      </g>
                    </Brain>
                    <CenterTitle>17种头脑风暴法<br />头脑风暴</CenterTitle>
                  </Blob>
                  {RIGHT.map(([h, s, y], i) => (
                    <Node key={i} $x={1189} $y={y} $side="r">
                      <NodeHead>{h}</NodeHead>
                      <MinusBtn $ml={21} $mr={19} />
                      <NodeSub>{s}</NodeSub>
                    </Node>
                  ))}
                  {LEFT.map(([h, s, y, x], i) => (
                    <Node key={i} $x={x} $y={y} $side="l">
                      <NodeSub>{s}</NodeSub>
                      <MinusBtn $ml={22} $mr={24} />
                      <NodeHead>{h}</NodeHead>
                    </Node>
                  ))}
                  <DashLine />
                  <DropBox viewBox="0 0 64 64">
                    <rect x="0.5" y="2.5" width="60" height="60" fill="none" stroke="#22e022" strokeWidth="1.4" strokeDasharray="4 3" />
                    <path d="M35 2H60V25L49 15L16 50L22 62H0V37L9 47L45 10Z" fill="#fff" stroke="#999" strokeWidth="1.2" />
                  </DropBox>
                  <PointerSvg viewBox="0 0 24 36">
                    <path d="M12 2V16M5 9H19M12 2L10 5H14ZM12 16L10 13H14ZM5 9L8 7V11ZM19 9L16 7V11Z" stroke="#111" strokeWidth="1" fill="#111" />
                    <path d="M10 12L20 24L15 24L19 33L16 34L12 25L9 29Z" fill="#fff" stroke="#111" strokeWidth="1" />
                  </PointerSvg>
                  <LooseMinus $ml={0} $mr={0} />
                </Canvas>
              </CanvasRow>
              <GrayBand $h={18} $line="top" />
              <HScrollStrip><HThumb /></HScrollStrip>
              <Palette>
                <PaletteIcon>
                  <Ico $s={13} viewBox="0 0 14 14"><path d="M6 0V3L2 8L7 14L12 8L8 3V0ZM7 6A1.5 1.5 0 1 1 7 9A1.5 1.5 0 1 1 7 6Z" fillRule="evenodd" /></Ico>
                  <Caret $ml={1} $c="#555" />
                </PaletteIcon>
                {PAL.map((c, i) => <Swatch key={i} $c={c} />)}
              </Palette>
            </WorkMain>
            <Gutter><GutterThumb /></Gutter>
          </WorkRow>
        </Workspace>

        <Rail>
          <RailTop><ChevronsRight size={17} strokeWidth={1.2} /></RailTop>
          <RailActive>
            <Ico $s={20} viewBox="0 0 20 20">
              <path d="M9 2L17 10L10 17L3 10Z" fill="none" stroke="#fff" strokeWidth="2" />
              <path d="M3 10H17L10 17Z" />
              <circle cx="17" cy="16" r="1.6" />
            </Ico>
          </RailActive>
        </Rail>
        <RightPanel>
          <RTabs>
            <RTab $active>填充</RTab><RTab>线条</RTab><RTab>阴影</RTab>
            <RClose><X size={16} strokeWidth={1.4} /></RClose>
          </RTabs>
          <RBody>
            {Radios.map((t, i) => <RadioRow key={t}><Radio $on={i === 1} />{t}</RadioRow>)}
            <FieldRow $mt={9}>颜色：<ColorField /></FieldRow>
            <FieldRow $mt={12}>亮度：</FieldRow>
            <FieldRow $mt={7}>
              <Slider><SliderFill style={{ width: "50%" }} /><SliderThumb style={{ left: 48 }} /></Slider>
              <SpinBox>0 %<Spin /></SpinBox>
            </FieldRow>
            <FieldRow $mt={12}>透明度：</FieldRow>
            <FieldRow $mt={7}>
              <Slider><SliderThumb style={{ left: 0 }} /></Slider>
              <SpinBox>0 %<Spin /></SpinBox>
            </FieldRow>
          </RBody>
        </RightPanel>
      </Body>

      <StatusBar>
        <StatusCell $w={48} $pl={18}>
          <Ico $s={14} viewBox="0 0 18 18"><path d="M0 2H1.5V16H0ZM16.5 2H18V16H16.5ZM3.5 3H14.5V15H3.5ZM5 4.5V13.5H13V4.5Z" fillRule="evenodd" /></Ico>
        </StatusCell>
        <StatusCell $w={127} $pl={9}>页-1<Spacer /><Caret $c="#777" /><Cell $w={12} /></StatusCell>
        <StatusCell $w={45} $pl={13}><Plus size={14} /></StatusCell>
        <StatusCell $w={77} $pl={26} $c="#0a7ffb">页-1</StatusCell>
        <StatusRight>
          <StatusText $mr={8}>形状数： 17.5/60</StatusText>
          <StatusText $mr={6} $c="#f39a3a">扩充</StatusText>
          <StatusIcon $mr={20}><Lightbulb size={14} color="#f7b52e" fill="#f7c94e" /></StatusIcon>
          <StatusIcon $mr={22}><Layers size={14} /></StatusIcon>
          <StatusIcon $mr={6}><Focus size={14} /></StatusIcon>
          <StatusText $mr={18}>专注</StatusText>
          <StatusIcon $mr={14}><CirclePlay size={14} strokeWidth={1.4} /></StatusIcon>
          <StatusText $mr={2}>100%</StatusText>
          <Caret $c="#888" />
          <StatusIcon $ml={15} $mr={3}><Minus size={13} /></StatusIcon>
          <ZoomLine />
          <StatusIcon $mr={15}><Plus size={13} /></StatusIcon>
          <StatusIcon $mr={19}><Maximize size={13} /></StatusIcon>
          <StatusIcon><Maximize size={13} /></StatusIcon>
        </StatusRight>
      </StatusBar>

      <RedArrow viewBox="0 0 1920 1030">
        <polygon points="43,427 803,340 802,335 829,339 804,348 803,344 44,431" fill="#f40000" />
      </RedArrow>
      <WatermarkVeil />
      <WmRed>电脑技术网</WmRed>
      <WmUrl>www.tagxp.com</WmUrl>
      <TagBox>
        <TagText>TAG</TagText>
        <TagSwirl viewBox="0 0 36 38">
          <path d="M30 2C14 4 2 16 2 26C2 34 12 36 22 30C16 32 8 32 8 26C8 20 16 12 30 2Z" fill="rgba(90,150,255,.5)" />
        </TagSwirl>
        <TagFaint>极光下载站<TagFaintUrl>www.xz7.com</TagFaintUrl></TagFaint>
      </TagBox>
    </Page>
  );
}

function DocGlyph({ c }) {
  return (
    <svg width="12" height="15" viewBox="0 0 12 15">
      <path d="M3 2H9V0H3ZM1 3H11V15H1Z" fill={c} />
      <rect x="3" y="8" width="4" height="5" fill="#fff" opacity=".6" />
    </svg>
  );
}
